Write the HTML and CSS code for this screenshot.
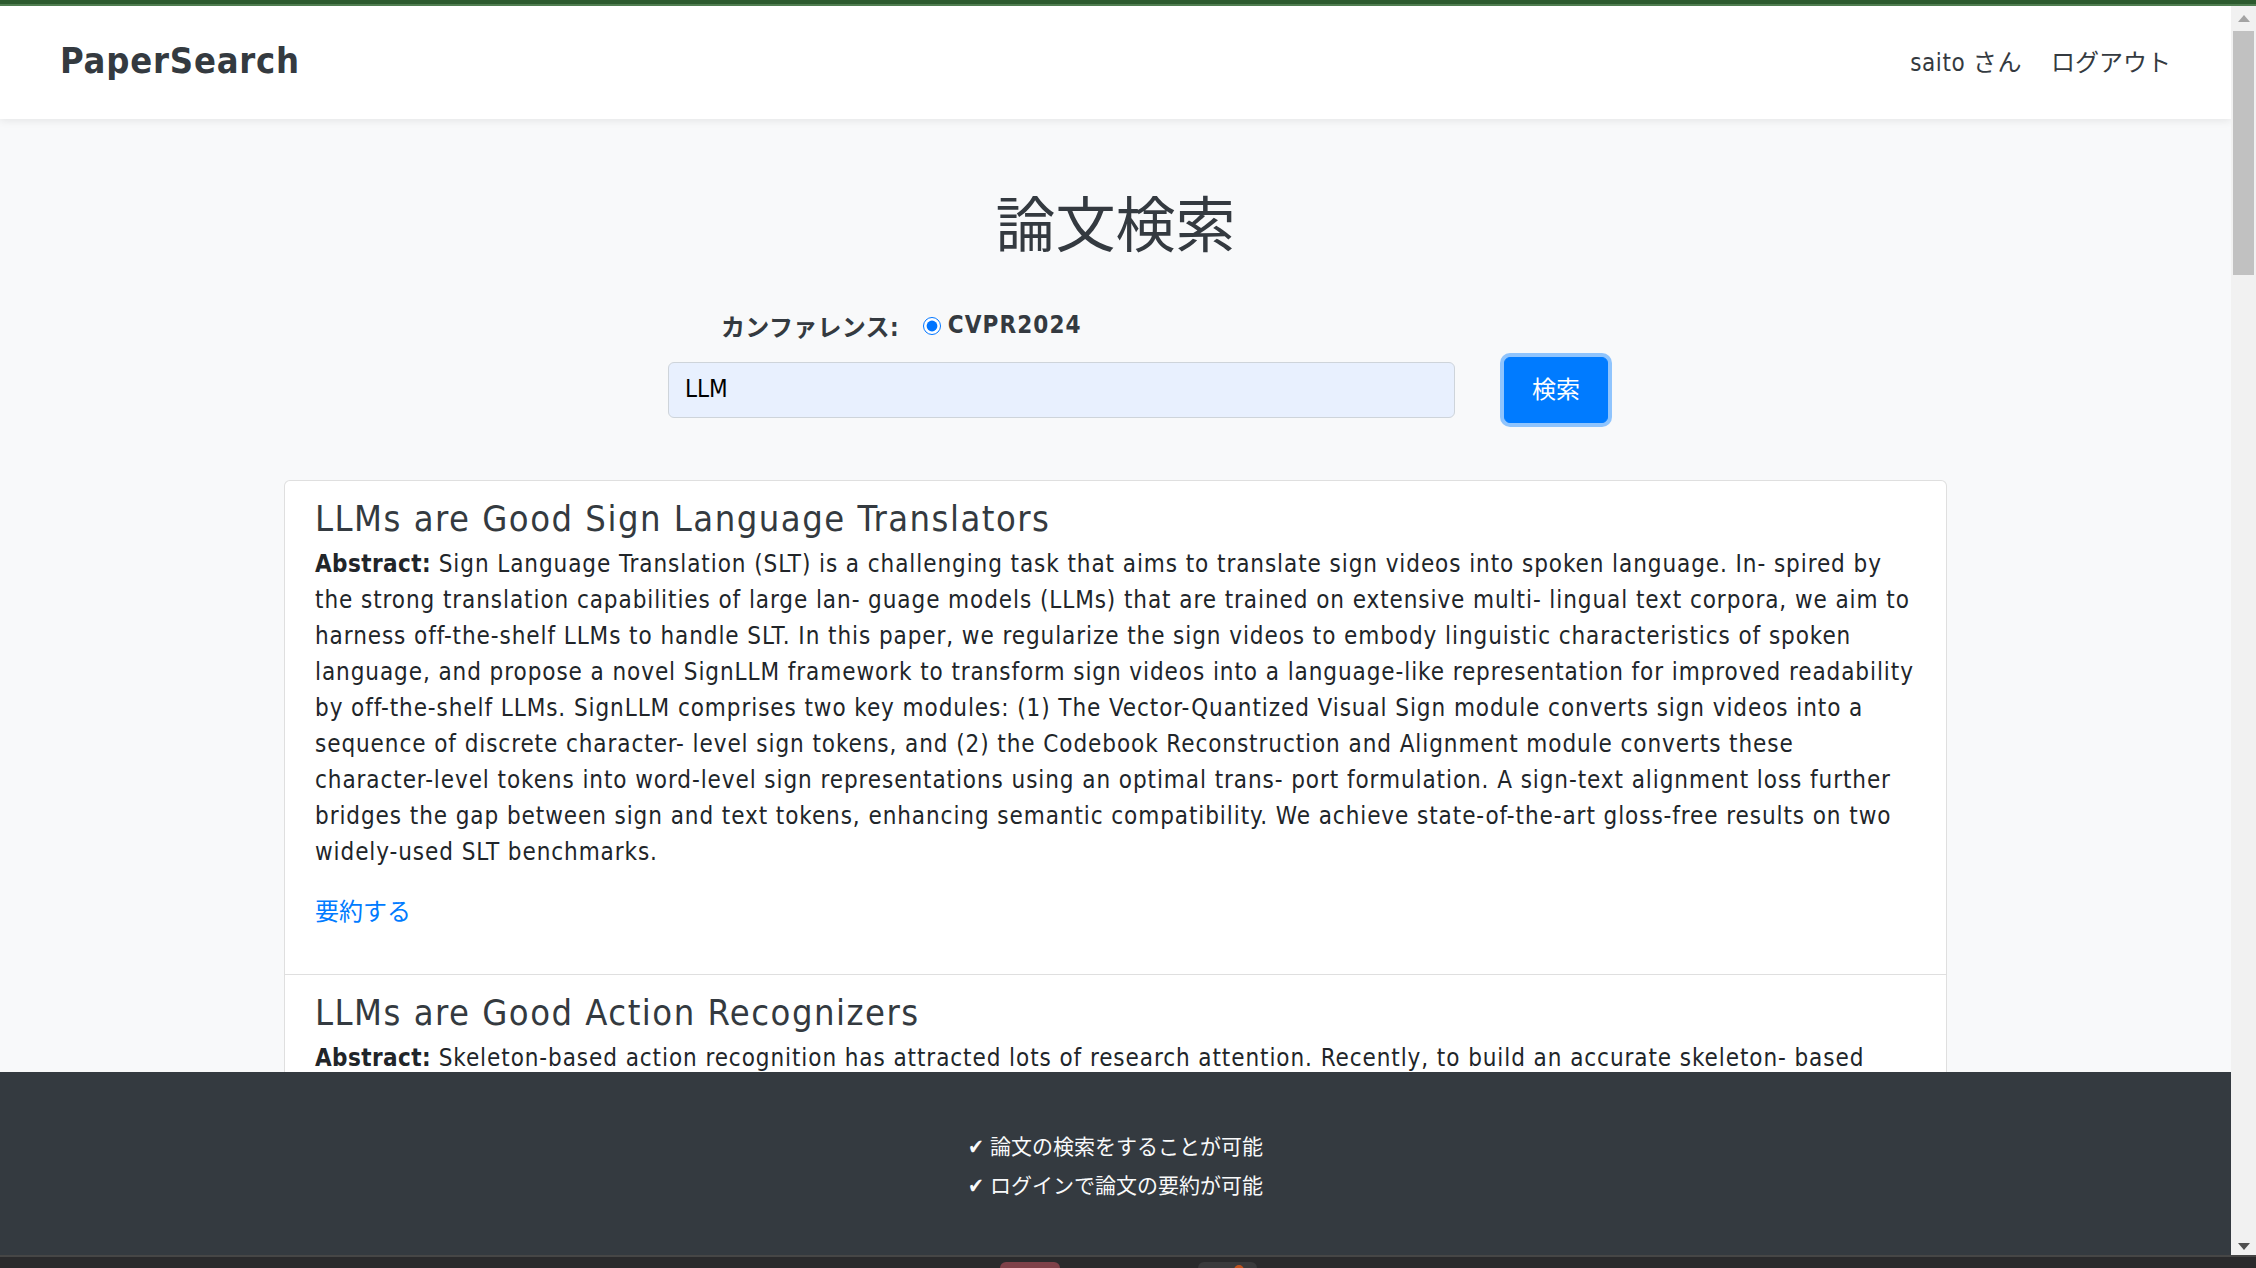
FILE: index.html
```html
<!DOCTYPE html>
<html lang="ja">
<head>
<meta charset="utf-8">
<title>PaperSearch</title>
<link rel="stylesheet" href="styles.css">
</head>
<body>
<div class="topband"></div>
<div class="window">
  <div class="viewport">
    <header class="navbar">
      <div class="brand">PaperSearch</div>
      <nav class="nav-right">
        <span class="nav-item nav-user">saito さん</span>
        <span class="nav-item">ログアウト</span>
      </nav>
    </header>
    <main class="content">
      <h1 class="page-title">論文検索</h1>
      <div class="container">
        <form class="search-form">
          <div class="conf-row">
            <span class="conf-label">カンファレンス:</span>
            <input class="conf-radio" type="radio" name="conf" checked>
            <span class="conf-name">CVPR2024</span>
          </div>
          <div class="search-row">
            <input class="search-input" type="text" value="LLM">
            <button class="search-btn" type="button">検索</button>
          </div>
        </form>
        <section class="card">
          <article class="item">
            <h4 class="item-title">LLMs are Good Sign Language Translators</h4>
            <p class="abstract"><b>Abstract:</b> Sign Language Translation (SLT) is a challenging task that aims to translate sign videos into spoken language. In- spired by<br>the strong translation capabilities of large lan- guage models (LLMs) that are trained on extensive multi- lingual text corpora, we aim to<br>harness off-the-shelf LLMs to handle SLT. In this paper, we regularize the sign videos to embody linguistic characteristics of spoken<br>language, and propose a novel SignLLM framework to transform sign videos into a language-like representation for improved readability<br>by off-the-shelf LLMs. SignLLM comprises two key modules: (1) The Vector-Quantized Visual Sign module converts sign videos into a<br>sequence of discrete character- level sign tokens, and (2) the Codebook Reconstruction and Alignment module converts these<br>character-level tokens into word-level sign representations using an optimal trans- port formulation. A sign-text alignment loss further<br>bridges the gap between sign and text tokens, enhancing semantic compatibility. We achieve state-of-the-art gloss-free results on two<br>widely-used SLT benchmarks.</p>
            <a class="summ" href="#">要約する</a>
          </article>
          <article class="item">
            <h4 class="item-title">LLMs are Good Action Recognizers</h4>
            <p class="abstract"><b>Abstract:</b> Skeleton-based action recognition has attracted lots of research attention. Recently, to build an accurate skeleton- based<br>action recognizer, a variety of works have been proposed. Among them, some works use large model architectures as backbones of<br>their recognizers to boost the skeleton data representation capability, while some other works pre-train their recognizers on<br>external data to enrich the knowledge. In this work, we observe that large language models which have been extensively used in</p>
          </article>
        </section>
      </div>
    </main>
    <footer class="footer">
      <p class="footer-line">✔ 論文の検索をすることが可能</p>
      <p class="footer-line">✔ ログインで論文の要約が可能</p>
    </footer>
  </div>
  <div class="scrollbar">
    <span class="sb-up"></span>
    <span class="sb-thumb"></span>
    <span class="sb-space"></span>
    <span class="sb-down"></span>
  </div>
</div>
<div class="strip">
  <span class="tab tab-red"></span>
  <span class="tab tab-gray"><span class="tab-dot"></span></span>
</div>
</body>
</html>
```

FILE: styles.css
```css
* { box-sizing: border-box; }
html, body { margin: 0; padding: 0; }
body {
  width: 2256px;
  height: 1268px;
  overflow: hidden;
  font-family: "DejaVu Sans", "Noto Sans CJK JP", sans-serif;
  font-stretch: condensed;
  color: #212529;
  background: #2a2a2c;
}
.topband {
  height: 6px;
  background: #2c5a2e;
  border-bottom: 2px solid #4f7d50;
}
.window {
  display: flex;
  height: 1249px;
}
.viewport {
  flex: 1;
  position: relative;
  overflow: hidden;
  background: #f8f9fa;
}
.scrollbar {
  width: 25px;
  background: #f1f1f1;
  display: flex;
  flex-direction: column;
  align-items: center;
  padding: 9px 0 5px;
}
.sb-up {
  width: 0; height: 0;
  border-left: 6px solid transparent;
  border-right: 6px solid transparent;
  border-bottom: 7px solid #a3a3a3;
  margin-bottom: 9px;
}
.sb-thumb {
  width: 21px;
  height: 244px;
  background: #c1c1c1;
}
.sb-space { flex: 1; }
.sb-down {
  width: 0; height: 0;
  border-left: 6px solid transparent;
  border-right: 6px solid transparent;
  border-top: 7px solid #505050;
}
.navbar {
  position: relative;
  z-index: 1;
  height: 113px;
  background: #fff;
  display: flex;
  align-items: center;
  justify-content: space-between;
  padding: 0 60px 5px;
  box-shadow: 0 2px 8px rgba(0,0,0,.08);
}
.brand {
  font-size: 36px;
  font-weight: 700;
  letter-spacing: 0.8px;
  color: #343a40;
}
.nav-right {
  display: flex;
  gap: 29px;
  font-size: 24px;
  color: #343a40;
}
.nav-user { letter-spacing: 0.6px; }
.content { padding-top: 71px; }
.page-title {
  margin: 0;
  text-align: center;
  font-size: 60px;
  line-height: 72px;
  font-weight: 400;
  color: #343a40;
}
.container {
  width: 1663px;
  margin: 0 auto;
}
.search-form { margin-left: 384px; }
.conf-row {
  margin-top: 45px;
  margin-left: 53px;
  height: 36px;
  display: flex;
  align-items: center;
  font-size: 24px;
  font-weight: 700;
  color: #343a40;
}
.conf-label { letter-spacing: 0.3px; }
.conf-radio {
  width: 18px;
  height: 18px;
  margin: 2px 7px 0 24px;
  accent-color: #0075ff;
}
.conf-name { letter-spacing: 1.1px; }
.search-row {
  margin-top: 14px;
  display: flex;
  align-items: center;
}
.search-input {
  width: 787px;
  height: 56px;
  border: 1px solid #ced4da;
  border-radius: 6px;
  background: #e8f0fe;
  padding: 0 16px 2px;
  font-family: inherit;
  font-stretch: condensed;
  font-size: 24px;
  color: #000;
}
.search-btn {
  margin-left: 49px;
  width: 104px;
  height: 66px;
  border: 1px solid #007bff;
  border-radius: 6px;
  background: #007bff;
  color: #fff;
  font-family: inherit;
  font-size: 24px;
  padding: 0 0 6px;
  box-shadow: 0 0 0 4px rgba(38,143,255,.5);
}
.card {
  margin-top: 57px;
  background: #fff;
  border: 1px solid rgba(0,0,0,.125);
  border-radius: 6px;
}
.item {
  padding: 16px 30px 20px;
  border-bottom: 1px solid rgba(0,0,0,.125);
}
.item-title {
  margin: 0 0 6px;
  font-size: 36px;
  line-height: 43px;
  font-weight: 400;
  letter-spacing: 1.5px;
  color: #343a40;
}
.abstract {
  margin: 0 0 24px;
  font-size: 24px;
  line-height: 36px;
  letter-spacing: 0.92px;
  white-space: nowrap;
}
.abstract b { font-weight: 700; letter-spacing: 0.4px; }
.summ {
  display: block;
  margin-bottom: 24px;
  font-size: 24px;
  line-height: 36px;
  color: #007bff;
  text-decoration: none;
}
.footer {
  position: absolute;
  left: 0; right: 0; bottom: 0;
  height: 183px;
  background: #343a40;
  padding-top: 56px;
  text-align: center;
  color: #f8f9fa;
  font-size: 21px;
  line-height: 39px;
}
.footer-line { margin: 0; }
.strip {
  height: 13px;
  border-top: 2px solid #464646;
  background: #2a2a2c;
  display: flex;
  align-items: flex-end;
  padding-left: 1000px;
  gap: 138px;
}
.tab {
  height: 6px;
  border-radius: 6px 6px 0 0;
  position: relative;
}
.tab-red { width: 60px; background: #7f4149; }
.tab-gray { width: 59px; background: #3a3a3c; }
.tab-dot {
  position: absolute;
  left: 36px; top: 3px;
  width: 10px; height: 10px;
  border-radius: 50%;
  background: #c0521e;
}
```
